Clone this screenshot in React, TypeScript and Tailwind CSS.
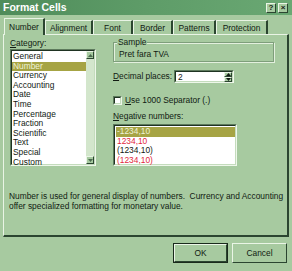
import React from 'react';

const categories = [
  'General',
  'Number',
  'Currency',
  'Accounting',
  'Date',
  'Time',
  'Percentage',
  'Fraction',
  'Scientific',
  'Text',
  'Special',
  'Custom',
];

const tabs = [
  { label: 'Number', w: 'w-[41px]' },
  { label: 'Alignment', w: 'w-[48px]' },
  { label: 'Font', w: 'w-[40px]' },
  { label: 'Border', w: 'w-[40px]' },
  { label: 'Patterns', w: 'w-[43px]' },
  { label: 'Protection', w: 'w-[52px]' },
];

const negatives = [
  { text: '-1234,10', red: false, selected: true },
  { text: '1234,10', red: true, selected: false },
  { text: '(1234,10)', red: false, selected: false },
  { text: '(1234,10)', red: true, selected: false },
];

const raised = 'border border-t-[#eaf5e6] border-l-[#eaf5e6] border-b-[#2b4530] border-r-[#2b4530]';

function Sunken({ className = '', children }: { className?: string; children?: React.ReactNode }) {
  return (
    <div className={`shrink-0 border border-t-[#5d7a5c] border-l-[#5d7a5c] border-b-[#eef7ea] border-r-[#eef7ea] ${className}`}>
      <div className="h-full border border-t-[#1f3322] border-l-[#1f3322] border-b-[#c4dcbd] border-r-[#c4dcbd]">
        {children}
      </div>
    </div>
  );
}

function Button({ label, focused }: { label: string; focused?: boolean }) {
  return (
    <div className={`shrink-0 w-[55px] h-[20px] ${focused ? 'border border-[#1a2a1c]' : ''}`}>
      <div className={`h-full ${raised} flex items-center justify-center`}>{label}</div>
    </div>
  );
}

function Arrow({ up, color = '#4b6b4e' }: { up?: boolean; color?: string }) {
  return (
    <svg width="5" height="3" viewBox="0 0 5 3">
      <path d={up ? 'M0 3 L2.5 0 L5 3 Z' : 'M0 0 L2.5 3 L5 0 Z'} fill={color} />
    </svg>
  );
}

export default function App() {
  return (
    <div
      className="w-[292px] h-[271px] bg-[#a7caa0] text-[8.4px] text-[#111a12] overflow-hidden flex flex-col"
      style={{ fontFamily: '"Liberation Sans", Arial, sans-serif' }}
    >
      {/* Title bar */}
      <div className="h-[15px] shrink-0 bg-gradient-to-r from-[#4f8c5a] via-[#5e9c68] to-[#6aa873] flex items-center justify-between pl-[3px] pr-[4px]">
        <span className="text-white font-bold text-[10.5px] leading-none">Format Cells</span>
        <div className="flex gap-[2px]">
          <div className={`w-[10px] h-[10px] bg-[#a7caa0] ${raised} flex items-center justify-center font-bold text-[8px] leading-none`}>?</div>
          <div className={`w-[10px] h-[10px] bg-[#a7caa0] ${raised} flex items-center justify-center font-bold text-[8px] leading-none`}>×</div>
        </div>
      </div>

      {/* Tabs */}
      <div className="flex items-end pl-[4px] h-[20px] shrink-0 -mb-[1px]">
        {tabs.map((t, i) => (
          <div
            key={t.label}
            className={`${t.w} ${
              i === 0
                ? 'h-[17px] relative z-10 bg-[#a7caa0]'
                : 'h-[15px]'
            } flex items-center justify-center border-l border-t border-l-[#e9f4e5] border-t-[#e9f4e5] border-r-2 border-r-[#2b4530] rounded-tl-[1px]`}
          >
            {t.label}
          </div>
        ))}
      </div>

      {/* Panel */}
      <div className="mx-[3px] h-[203px] shrink-0 border-l border-t border-l-[#e9f4e5] border-t-[#e9f4e5] border-r-2 border-b-2 border-r-[#2b4530] border-b-[#2b4530] pl-[6px] pt-[3px] flex flex-col">
        <div className="flex gap-[17px]">
          {/* Left column */}
          <div className="flex flex-col w-[86px]">
            <span className="leading-[10px] mb-[1px]"><u>C</u>ategory:</span>
            <Sunken className="h-[117px] bg-white">
              <div className="flex h-full">
                <div className="flex-1 flex flex-col pt-[1px]">
                  {categories.map((c, i) => (
                    <div
                      key={c}
                      className={`h-[9.6px] leading-[9.6px] pl-[1px] ${i === 1 ? 'bg-[#a6a444] text-[#eef3d8]' : ''}`}
                    >
                      {c}
                    </div>
                  ))}
                </div>
                <div className="w-[8px] bg-[#d3e6cc] flex flex-col justify-between">
                  <div className={`h-[8px] bg-[#a7caa0] ${raised} flex items-center justify-center`}>
                    <Arrow up />
                  </div>
                  <div className={`h-[8px] bg-[#a7caa0] ${raised} flex items-center justify-center`}>
                    <Arrow />
                  </div>
                </div>
              </div>
            </Sunken>
          </div>

          {/* Right column */}
          <div className="flex flex-col w-[161px]">
            <div className="relative mt-[4px] h-[20px] shrink-0 border border-[#7e9e7b] shadow-[inset_1px_1px_0_#e3f0de,1px_1px_0_#e3f0de]">
              <span className="absolute -top-[6px] left-[3px] bg-[#a7caa0] px-[1px] leading-[10px]">Sample</span>
              <div className="pl-[5px] pt-[6px] leading-[10px]">Pret fara TVA</div>
            </div>

            <div className="flex items-center mt-[8px] h-[13px]">
              <span className="w-[61px]"><u>D</u>ecimal places:</span>
              <Sunken className="w-[60px] h-[13px] bg-white">
                <div className="flex h-full">
                  <span className="flex-1 pl-[2px] leading-[10px]">2</span>
                  <div className="w-[8px] flex flex-col bg-[#a7caa0]">
                    <div className={`flex-1 ${raised} flex items-center justify-center`}>
                      <Arrow up color="#111a12" />
                    </div>
                    <div className={`flex-1 ${raised} flex items-center justify-center`}>
                      <Arrow color="#111a12" />
                    </div>
                  </div>
                </div>
              </Sunken>
            </div>

            <div className="flex items-center mt-[12px] gap-[3px] h-[10px]">
              <Sunken className="w-[9px] h-[9px] bg-white" />
              <span><u>U</u>se 1000 Separator (.)</span>
            </div>

            <span className="mt-[6px] leading-[10px]"><u>N</u>egative numbers:</span>
            <Sunken className="mt-[3px] w-[124px] h-[42px] bg-white">
              <div className="flex flex-col pt-[1px] pl-[1px]">
                {negatives.map((n, i) => (
                  <div
                    key={i}
                    className={`h-[9.5px] leading-[9.5px] pl-[1px] ${n.selected ? 'bg-[#a6a444] text-[#eef3d8]' : ''} ${n.red ? 'text-[#e2283c]' : ''}`}
                  >
                    {n.text}
                  </div>
                ))}
              </div>
            </Sunken>
          </div>
        </div>

        <p className="mt-[25px] leading-[10px] -ml-[1px]">
          Number is used for general display of numbers.&nbsp; Currency and Accounting offer specialized formatting for monetary value.
        </p>
      </div>

      {/* Buttons */}
      <div className="flex justify-end gap-[4px] pr-[5px] pt-[6px]">
        <Button label="OK" focused />
        <Button label="Cancel" />
      </div>
    </div>
  );
}
